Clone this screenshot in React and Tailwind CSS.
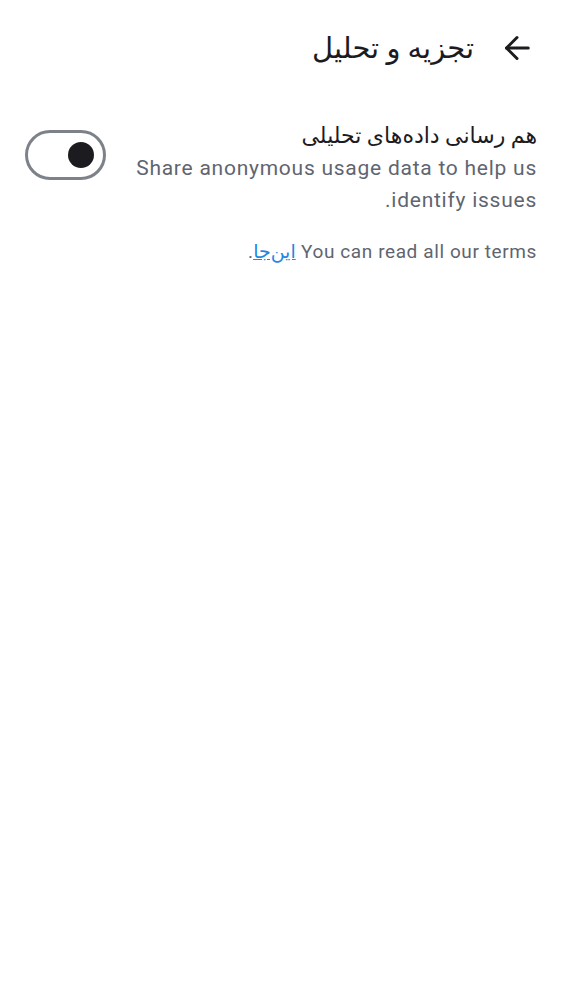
import React, { useState } from 'react';

const App = () => {
  const [enabled, setEnabled] = useState(false);

  return (
    <div dir="rtl" className="min-h-screen bg-white">
      <div className="font-['Roboto','DejaVu_Sans',sans-serif]">
        {/* Header */}
        <div className="flex items-center gap-[25px] pl-[28px] pr-[27px] pt-[28px] pb-[52px]">
          <button className="flex h-[36px] w-[36px] items-center justify-center text-[#1c1b1f]">
            <svg width="36" height="36" viewBox="0 0 24 24" fill="none" stroke="currentColor" strokeWidth="2" strokeLinecap="round" strokeLinejoin="round">
              <path d="M19.5 12H5" />
              <path d="M12 19l-7-7 7-7" />
            </svg>
          </button>
          <h1 className="text-[29px] leading-[40px] text-[#1c1b1f]">تجزیه و تحلیل</h1>
        </div>

        {/* Analytics toggle row */}
        <div className="flex items-center justify-between gap-4 px-[25px]">
          <div className="flex flex-col">
            <div className="text-[22px] leading-[32px] text-[#1c1b1f]">هم رسانی داده‌های تحلیلی</div>
            <div className="text-[21px] leading-[32px] tracking-[0.75px] text-[#5f6570]">
              Share anonymous usage data to help us identify issues.
            </div>
          </div>
          <button
            onClick={() => setEnabled(!enabled)}
            className="mt-[10px] flex h-[50px] w-[81px] shrink-0 items-center self-start rounded-full border-[3px] border-[#7d828a] bg-white px-[9px]"
          >
            <span className="h-[26px] w-[26px] rounded-full bg-[#1c1b1f]" />
          </button>
        </div>

        {/* Terms */}
        <div className="px-[25px] pt-[22px] text-[19px] leading-[28px] tracking-[0.6px] text-[#5f6570]">
          You can read all our terms <a href="#" className="text-[#1e88e5] underline">این‌جا</a>.
        </div>
      </div>
    </div>
  );
};

export default App;
